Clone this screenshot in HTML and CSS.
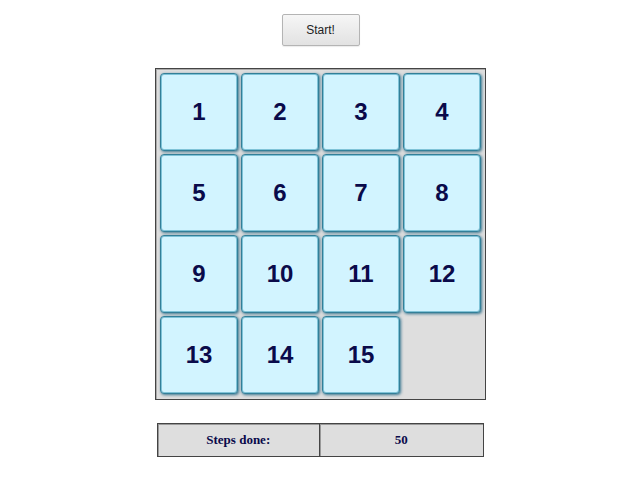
FILE: index.html
```html
<!DOCTYPE html>
<html>
<head>
<meta charset="utf-8">
<link rel="stylesheet" href="styles.css">
</head>
<body>
<div class="page">
  <button class="start">Start!</button>
  <div class="board">
    <div class="tile">1</div>
    <div class="tile">2</div>
    <div class="tile">3</div>
    <div class="tile">4</div>
    <div class="tile">5</div>
    <div class="tile">6</div>
    <div class="tile">7</div>
    <div class="tile">8</div>
    <div class="tile">9</div>
    <div class="tile">10</div>
    <div class="tile">11</div>
    <div class="tile">12</div>
    <div class="tile">13</div>
    <div class="tile">14</div>
    <div class="tile">15</div>
    <div class="empty"></div>
  </div>
  <table class="steps">
    <tr><td>Steps done:</td><td>50</td></tr>
  </table>
</div>
</body>
</html>
```
FILE: styles.css
```css
html, body { margin: 0; padding: 0; background: #fff; }
.page {
  display: flex;
  flex-direction: column;
  align-items: center;
  padding-top: 14px;
}
.start {
  width: 78px;
  height: 32px;
  font-family: "Liberation Sans", Arial, sans-serif;
  font-size: 12px;
  color: #222;
  background: linear-gradient(#f6f6f6, #e2e2e2);
  border: 1px solid #b4b4b4;
  border-radius: 2px;
  box-shadow: 0 1px 1px rgba(0,0,0,0.08);
  padding: 0;
  margin-left: 1px;
}
.board {
  margin-top: 22px;
  margin-left: 1px;
  box-sizing: border-box;
  width: 331px;
  height: 332px;
  border: 1px solid #444;
  box-shadow: inset 1px 1px 0 #aaa;
  background: #dedede;
  padding: 4px 3px 3px 4px;
  display: grid;
  grid-template-columns: repeat(4, 78px);
  grid-template-rows: repeat(4, 78px);
  gap: 3px;
}
.tile {
  box-sizing: border-box;
  background: #d2f4ff;
  border: 1px solid #337f98;
  border-radius: 4px;
  box-shadow: 1px 1px 3px rgba(30,100,130,0.85), inset 0 0 0 1px #7fc3d8;
  display: flex;
  align-items: center;
  justify-content: center;
  font-family: "Liberation Sans", Arial, sans-serif;
  font-weight: bold;
  font-size: 24px;
  color: #0a0a4a;
}
.steps {
  margin-top: 23px;
  width: 327px;
  height: 34px;
  border-collapse: separate;
  border-spacing: 0;
  border: 1px solid #444;
  box-shadow: inset 1px 1px 0 #999;
  background: #dedede;
  font-family: "Liberation Serif", "Times New Roman", serif;
  font-weight: bold;
  font-size: 13px;
  color: #0a0a4a;
}
.steps td {
  text-align: center;
  width: 50%;
  padding: 0;
}
.steps td:first-child {
  border-right: 1px solid #444;
  box-shadow: 1px 0 0 #999;
}
```
